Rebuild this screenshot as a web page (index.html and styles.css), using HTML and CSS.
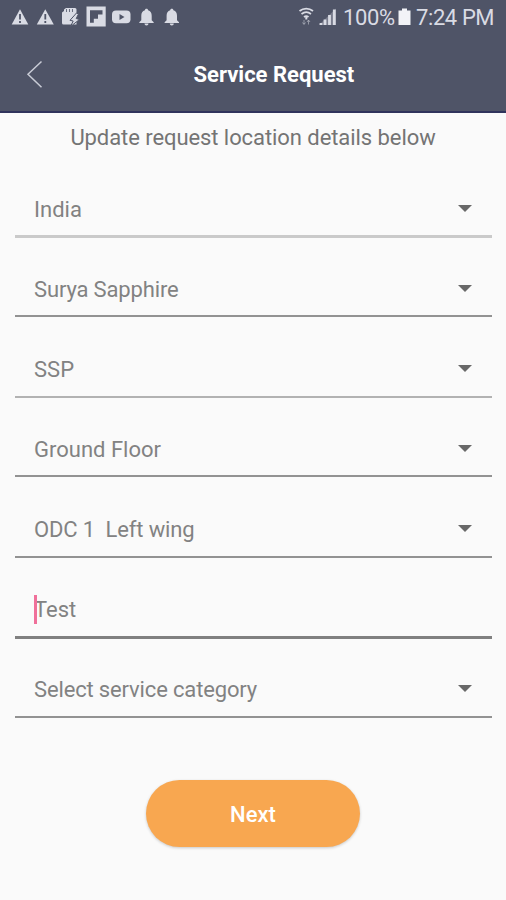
FILE: index.html
```html
<!DOCTYPE html>
<html lang="en">
<head>
<meta charset="utf-8">
<title>Service Request</title>
<link rel="stylesheet" href="styles.css">
</head>
<body>
<header class="top">
  <div class="status">
    <svg class="status-icons" width="190" height="36" viewBox="0 0 190 36" fill="#d9dbe4">
      <path d="M20 9.200 28.300 24.600H11.700Z"/><path d="M45.300 9.200 53.800 24.600H36.800Z"/>
      <path d="M20 14v5.500M20 21v2M45.300 14v5.500M45.300 21v2" stroke="#4f5467" stroke-width="1.800"/>
      <path d="M66 8h9q1.500 0 1.500 1.500v15H63.500q-1.500 0-1.500-1.500v-10.500l2-1.500V9.500z"/>
      <path d="M66.500 9v3M69.500 9v3M72.500 9v3" stroke="#4f5467" stroke-width=".8"/>
      <path d="M76.500 13 70 20.300l3.200.7-2.700 5.500 9-7-3.300-1 2.300-4.500z" stroke="#4f5467" stroke-width="1"/>
      <path fill-rule="evenodd" d="M86.500 6.500h19.200v20H86.500zM90 10.200v12.600h3.800v-4h4.200v-4.300h4.500v-4.300z"/>
      <rect x="112" y="10.500" width="18.500" height="12.800" rx="4"/>
      <path d="m119.500 14 5 3-5 3z" fill="#4f5467"/>
      <path id="bell" d="M146.500 8.800c1 0 1.600.6 1.600 1.500 2.500.8 3.600 2.800 3.600 5.500v4.500l2 2v.8h-14.400v-.8l2-2v-4.500c0-2.700 1.100-4.700 3.600-5.500 0-.9.600-1.500 1.600-1.500zM144.500 23.500h4c0 1.200-.8 2-2 2s-2-.8-2-2z"/>
      <use href="#bell" x="25.300"/>
    </svg>
    <div class="status-right">
      <svg width="42" height="36" viewBox="298 0 42 36" fill="none" stroke="#d9dbe4">
        <path d="M299.500 11c4-3.300 9.500-3.300 13.500 0M301.500 14c3-2.300 6.500-2.300 9.500 0M304 17c1.500-1.300 3-1.300 4.500 0" stroke-width="1.700"/>
        <path d="M306.300 16v3.500" stroke-width="2"/>
        <path d="m304 20v4m-1.500-1.500 1.500 2 1.500-2M308.500 24.500v-4m-1.500 1.500 1.500-2 1.500 2" stroke-width="1" opacity=".5"/>
        <path d="M319 25 336 8.500V25z" fill="#d9dbe4" stroke="none" opacity=".3"/>
        <path d="M321 23v2M325 19.500V25M329.500 15V25M334.300 9.500V25" stroke-width="2.800"/>
      </svg>
      <span class="pct">100%</span>
      <svg class="battery" width="13" height="36" viewBox="0 0 13 36" fill="#f2f3f7"><path d="M4 8.500h5v2h3.500V25H.5V10.500H4z"/></svg>
      <span class="clock">7:24 PM</span>
    </div>
  </div>
  <div class="bar">
    <svg class="back" width="18" height="30" viewBox="0 0 18 30" fill="none" stroke="#c9ccd6" stroke-width="1.500"><path d="M15.500 1.500 2 14.200l13.500 13"/></svg>
    <h1 class="title">Service Request</h1>
  </div>
</header>
<main>
  <p class="hint">Update request location details below</p>
  <form class="fields">
    <div class="field soft"><span class="value">India</span><i class="caret"></i></div>
    <div class="field raised"><span class="value tight">Surya Sapphire</span><i class="caret"></i></div>
    <div class="field pale"><span class="value">SSP</span><i class="caret"></i></div>
    <div class="field raised"><span class="value">Ground Floor</span><i class="caret"></i></div>
    <div class="field"><span class="value tight">ODC 1&nbsp; Left wing</span><i class="caret"></i></div>
    <div class="field active"><span class="value"><i class="cursor"></i>Test</span></div>
    <div class="field"><span class="value tight">Select service category</span><i class="caret"></i></div>
  </form>
  <button class="next" type="button">Next</button>
</main>
</body>
</html>
```
FILE: styles.css
```css
* { box-sizing: border-box; }
body { margin: 0; height: 900px; overflow: hidden; background: #fafafa; color: #828282; font: 22px/30px Roboto, sans-serif; }
.top { height: 113px; background: #4f5467; border-bottom: 2px solid #30345c; }
.status { display: flex; justify-content: space-between; height: 36px; }
.status svg { display: block; flex: none; }
.status-right { display: flex; width: 208px; color: #d9dbe4; line-height: 35px; white-space: nowrap; }
.pct { width: 55px; margin-left: 3px; letter-spacing: -.4px; }
.battery { margin: 0 5px 0 0; }
.clock { letter-spacing: -.4px; }
.bar { display: flex; align-items: center; height: 77px; padding-left: 26px; }
.back { flex: none; }
.title { flex: 1; margin: 0 0 0 149.500px; color: #fff; font-size: 22px; line-height: 30px; font-weight: 700; }
.hint { margin: 10px 0 0; text-align: center; color: #747474; letter-spacing: -.07px; }
.fields { display: grid; grid-template-rows: 85px 79px 81px 79px 81px 81px 79px; margin: 0 14px 0 15px; }
.field { display: flex; justify-content: space-between; align-items: flex-end; padding: 0 20px 11px 19px; border-bottom: 2px solid #929292; }
.soft { padding-bottom: 10px; border-bottom: 3px solid #cacaca; }
.raised { padding-bottom: 10px; }
.pale { border-bottom-color: #b2b2b2; }
.active { border-bottom: 3px solid #808080; }
.value { position: relative; }
.tight { letter-spacing: -.15px; }
.caret { width: 14px; height: 7px; margin-bottom: 13px; background: #686868; clip-path: polygon(0 0, 100% 0, 50% 100%); }
.cursor { position: absolute; left: 0; top: 0; width: 3px; height: 29px; background: #f0709a; }
.next { display: block; width: 214px; height: 67px; margin: 62px 0 0 146px; padding: 2px 0 0; border: 0; border-radius: 34px; background: #f8a750; box-shadow: 0 1px 3px #0003; color: #fff; font: 500 22px/30px Roboto, sans-serif; }
```
